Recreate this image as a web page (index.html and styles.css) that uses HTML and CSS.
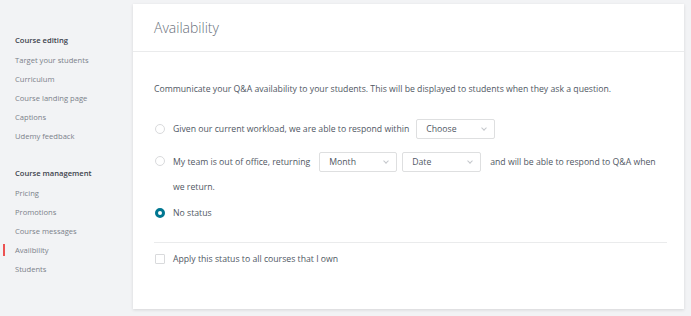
FILE: index.html
```html
<!DOCTYPE html>
<html lang="en">
<head>
  <meta charset="UTF-8">
  <title>Availability</title>
  <link rel="stylesheet" href="styles.css">
</head>
<body>

<div class="page">
  <nav class="sidebar">
    <div class="nav-group">
      <div class="nav-title">Course editing</div>
      <a class="nav-item">Target your students</a>
      <a class="nav-item">Curriculum</a>
      <a class="nav-item">Course landing page</a>
      <a class="nav-item">Captions</a>
      <a class="nav-item">Udemy feedback</a>
    </div>
    <div class="nav-group">
      <div class="nav-title">Course management</div>
      <a class="nav-item">Pricing</a>
      <a class="nav-item">Promotions</a>
      <a class="nav-item">Course messages</a>
      <a class="nav-item active">Availbility</a>
      <a class="nav-item">Students</a>
    </div>
  </nav>

  <main class="card">
    <div class="card-header">
      <h1>Availability</h1>
    </div>
    <div class="card-body">
      <p class="intro">Communicate your Q&amp;A availability to your students. This will be displayed to students when they ask a question.</p>

      <div class="option">
        <span class="radio"></span>
        <span class="label">Given our current workload, we are able to respond within</span>
        <span class="select select-choose">Choose <span class="caret"></span></span>
      </div>

      <div class="option option-wrap">
        <span class="radio"></span>
        <div class="wrap-text">
          <div class="line">
            <span class="label">My team is out of office, returning</span>
            <span class="select select-month">Month <span class="caret"></span></span>
            <span class="select select-date">Date <span class="caret"></span></span>
            <span class="label after">and will be able to respond to Q&amp;A when</span>
          </div>
          <div class="line-2">we return.</div>
        </div>
      </div>

      <div class="option">
        <span class="radio checked"></span>
        <span class="label">No status</span>
      </div>

      <hr class="divider">

      <div class="option apply">
        <span class="checkbox"></span>
        <span class="label">Apply this status to all courses that I own</span>
      </div>
    </div>
  </main>
</div>

</body>
</html>
```

FILE: styles.css
```css
body {
  margin: 0;
  padding: 0;
  background-color: #f2f3f5;
  font-family: 'Open Sans', 'Noto Sans', sans-serif;
  color: #505763;
  width: 691px;
  height: 316px;
  overflow: hidden;
}

.page {
  display: flex;
  align-items: flex-start;
}

/* Sidebar */
.sidebar {
  width: 118px;
  padding: 33px 0 0 15px;
  flex-shrink: 0;
}

.nav-group {
  display: flex;
  flex-direction: column;
  margin-bottom: 18px;
}

.nav-title {
  font-size: 7.6px;
  font-weight: 600;
  color: #3c424c;
  height: 14px;
  line-height: 14px;
  margin-bottom: 6px;
}

.nav-item {
  position: relative;
  font-size: 7.6px;
  color: #7b818a;
  height: 19px;
  line-height: 14px;
}

.nav-item.active::before {
  content: "";
  position: absolute;
  left: -12px;
  top: 1px;
  width: 2px;
  height: 12px;
  background-color: #ec5252;
}

/* Card */
.card {
  margin-top: 4px;
  width: 551px;
  height: 305px;
  background-color: #fff;
  box-shadow: 0 1px 3px rgba(0, 0, 0, 0.12);
  box-sizing: border-box;
}

.card-header {
  height: 48px;
  border-bottom: 1px solid #eaebec;
  padding-left: 21px;
  display: flex;
  align-items: center;
  box-sizing: border-box;
}

.card-header h1 {
  margin: 0;
  font-size: 14px;
  font-weight: 300;
  color: #686f7a;
}

.card-body {
  padding: 30px 17px 0 21px;
}

.intro {
  margin: 0 0 23px;
  font-size: 8.7px;
  line-height: 14px;
  color: #505763;
}

.option {
  display: flex;
  align-items: center;
  font-size: 8.7px;
  color: #505763;
  min-height: 20px;
  margin-bottom: 13px;
}

.option-wrap {
  align-items: flex-start;
  margin-bottom: 10px;
}

.option-wrap .radio {
  margin-top: 4px;
}

.wrap-text .line {
  display: flex;
  align-items: center;
}

.line-2 {
  margin-top: 9px;
  line-height: 12px;
}

.radio {
  width: 10px;
  height: 10px;
  border: 1px solid #d9dadc;
  border-radius: 50%;
  box-sizing: border-box;
  margin: 0 8px 0 1px;
  flex-shrink: 0;
}

.radio.checked {
  border: 3px solid #007791;
}

.checkbox {
  width: 10px;
  height: 10px;
  border: 1px solid #d9dadc;
  border-radius: 1px;
  box-sizing: border-box;
  margin: 0 8px 0 1px;
  flex-shrink: 0;
}

.select {
  display: flex;
  align-items: center;
  justify-content: space-between;
  height: 20px;
  border: 1px solid #dedfe0;
  border-radius: 2px;
  box-sizing: border-box;
  padding: 0 8px 0 9px;
  color: #505763;
}

.caret {
  width: 3px;
  height: 3px;
  border-right: 1px solid #c4c7cb;
  border-bottom: 1px solid #c4c7cb;
  transform: rotate(45deg);
  margin-top: -2px;
}

.select-choose {
  width: 79px;
  margin-left: 7px;
}

.select-month {
  width: 78px;
  margin-left: 9px;
}

.select-date {
  width: 79px;
  margin-left: 5px;
}

.after {
  margin-left: 9px;
}

.divider {
  border: none;
  border-top: 1px solid #eaebec;
  margin: 19px 0 6px;
}

.apply {
  margin-bottom: 0;
}
```
